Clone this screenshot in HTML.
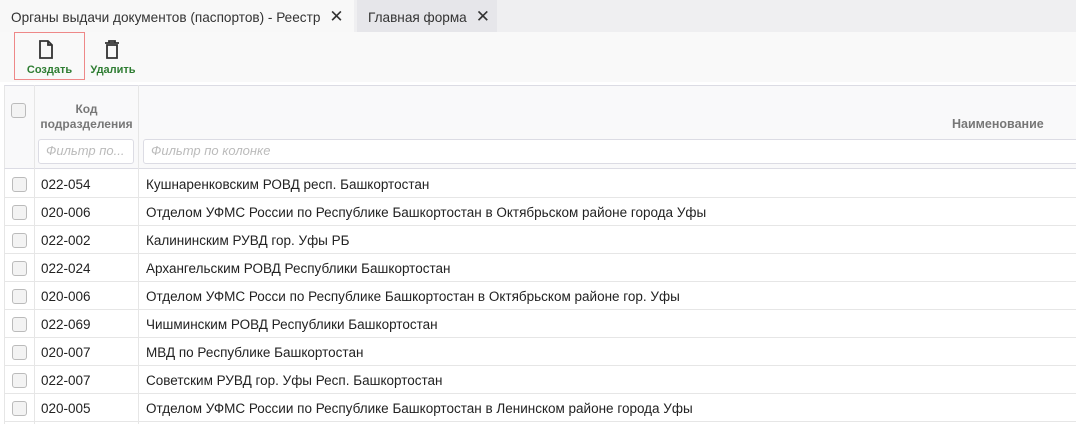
<!DOCTYPE html><html><head><meta charset="utf-8"><style>
body{margin:0;width:1076px;height:424px;overflow:hidden;background:#fff;font-family:"Liberation Sans","DejaVu Sans",sans-serif;font-size:13.5px;color:#222;position:relative}
.a{position:absolute}
.tabs{left:0;top:0;width:1076px;height:32px;background:#efeff1}
.tab{top:0;height:32px;line-height:34px;font-size:13.6px;color:#333}
.x{font-weight:bold;font-size:17px;margin-left:9px;color:#333}
.tb{left:0;top:32px;width:1076px;height:50px;background:#f9f9f9}
.btn{font-size:11px;color:#2e7d32;font-weight:bold;text-align:center}
.cb{width:13px;height:13px;border:1px solid #bbb;border-radius:3px;background:#f3f3f3}
.row{left:4px;width:1072px;height:27px;border-bottom:1px solid #e6e6e6}
.row span{position:absolute;top:7px}
.inp{border:1px solid #dcdce4;border-radius:3px;background:#fff;color:#bbb;font-style:italic;font-size:13px;line-height:22px;padding-left:7px;box-sizing:border-box}
</style></head><body>
<div class="a tabs"></div>
<div class="a tab" style="left:0;width:354px;background:#f8f8f8;padding-left:11px;box-sizing:border-box">Органы выдачи документов (паспортов) - Реестр<span class="x">✕</span></div>
<div class="a tab" style="left:357px;width:140px;background:#e6e6ea;padding-left:11px;box-sizing:border-box">Главная форма<span class="x">✕</span></div>
<div class="a tb"></div>
<div class="a" style="left:14px;top:32px;width:71px;height:48px;border:1px solid #e88;box-sizing:border-box"></div>
<svg class="a" style="left:38px;top:40px" width="16" height="20" viewBox="0 0 16 20"><path d="M2 1h8l4 4v13H2z M10 1v4h4" fill="none" stroke="#333" stroke-width="1.8"/></svg>
<div class="a btn" style="left:14px;top:64px;width:71px">Создать</div>
<svg class="a" style="left:104px;top:40px" width="16" height="20" viewBox="0 0 16 20"><path d="M1 3h14M5 3V1h6v2M3 5h10v13H3z" fill="none" stroke="#333" stroke-width="1.8"/></svg>
<div class="a btn" style="left:88px;top:64px;width:50px">Удалить</div>
<div class="a" style="left:4px;top:85px;width:1072px;height:84px;background:#f9f9fa;border-top:1px solid #dcdce4;border-left:1px solid #e6e6e6;border-bottom:1px solid #dcdce4;box-sizing:border-box"></div>
<div class="a" style="left:34px;top:85px;width:1px;height:339px;background:#e6e6e6"></div>
<div class="a" style="left:138px;top:85px;width:1px;height:339px;background:#e6e6e6"></div>
<div class="a" style="left:4px;top:169px;width:1px;height:255px;background:#e6e6e6"></div>
<div class="a cb" style="left:11px;top:103px"></div>
<div class="a" style="left:35px;top:102px;width:103px;text-align:center;font-weight:bold;color:#777;font-size:12px;line-height:15px">Код<br>подразделения</div>
<div class="a" style="left:952px;top:117px;font-weight:bold;color:#777;font-size:12.5px">Наименование</div>
<div class="a inp" style="left:38px;top:139px;width:96px;height:25px">Фильтр по...</div>
<div class="a inp" style="left:143px;top:139px;width:940px;height:25px">Фильтр по колонке</div>
<div class="a row" style="top:170px"><div class="a cb" style="left:8px;top:7px"></div><span style="left:37px">022-054</span><span style="left:142px">Кушнаренковским РОВД респ. Башкортостан</span></div>
<div class="a row" style="top:198px"><div class="a cb" style="left:8px;top:7px"></div><span style="left:37px">020-006</span><span style="left:142px">Отделом УФМС России по Республике Башкортостан в Октябрьском районе города Уфы</span></div>
<div class="a row" style="top:226px"><div class="a cb" style="left:8px;top:7px"></div><span style="left:37px">022-002</span><span style="left:142px">Калининским РУВД гор. Уфы РБ</span></div>
<div class="a row" style="top:254px"><div class="a cb" style="left:8px;top:7px"></div><span style="left:37px">022-024</span><span style="left:142px">Архангельским РОВД Республики Башкортостан</span></div>
<div class="a row" style="top:282px"><div class="a cb" style="left:8px;top:7px"></div><span style="left:37px">020-006</span><span style="left:142px">Отделом УФМС Росси по Республике Башкортостан в Октябрьском районе гор. Уфы</span></div>
<div class="a row" style="top:310px"><div class="a cb" style="left:8px;top:7px"></div><span style="left:37px">022-069</span><span style="left:142px">Чишминским РОВД Республики Башкортостан</span></div>
<div class="a row" style="top:338px"><div class="a cb" style="left:8px;top:7px"></div><span style="left:37px">020-007</span><span style="left:142px">МВД по Республике Башкортостан</span></div>
<div class="a row" style="top:366px"><div class="a cb" style="left:8px;top:7px"></div><span style="left:37px">022-007</span><span style="left:142px">Советским РУВД гор. Уфы Респ. Башкортостан</span></div>
<div class="a row" style="top:394px"><div class="a cb" style="left:8px;top:7px"></div><span style="left:37px">020-005</span><span style="left:142px">Отделом УФМС России по Республике Башкортостан в Ленинском районе города Уфы</span></div>
</body></html>
